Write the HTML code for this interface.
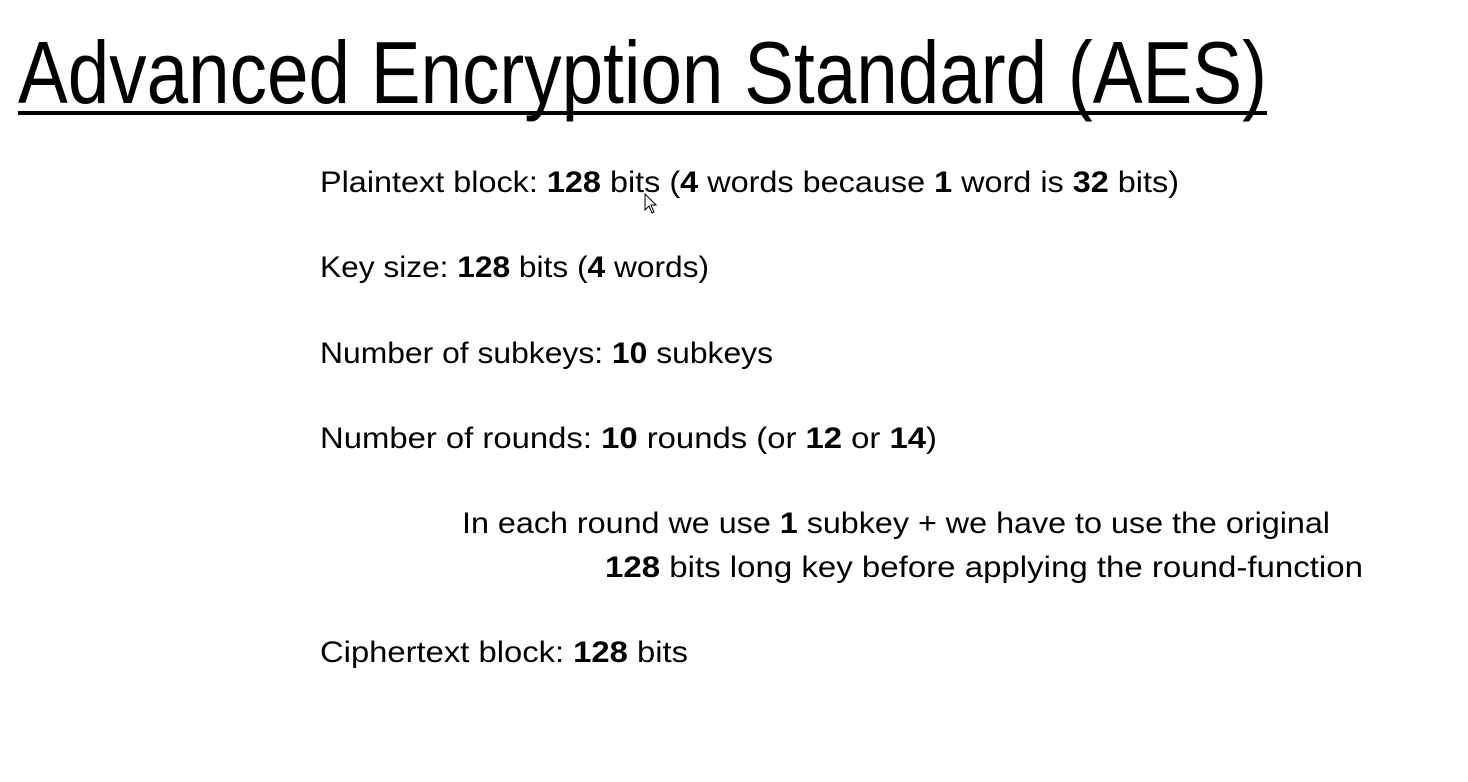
<!DOCTYPE html>
<html><head><meta charset="utf-8"><style>
html,body{margin:0;padding:0;background:#fff;width:1468px;height:782px;overflow:hidden}
svg{display:block}
text{font-family:"Liberation Sans",sans-serif;fill:#000}
</style></head><body>
<svg width="1468" height="782" viewBox="0 0 1468 782">
<text x="18" y="103" font-size="88" textLength="1249" lengthAdjust="spacingAndGlyphs">Advanced Encryption Standard (AES)</text>
<rect x="18" y="111" width="1249" height="4" fill="#000"/>
<g font-size="30">
<text x="320" y="192" textLength="859" lengthAdjust="spacingAndGlyphs">Plaintext block: <tspan font-weight="bold">128</tspan> bits (<tspan font-weight="bold">4</tspan> words because <tspan font-weight="bold">1</tspan> word is <tspan font-weight="bold">32</tspan> bits)</text>
<text x="320" y="277" textLength="389" lengthAdjust="spacingAndGlyphs">Key size: <tspan font-weight="bold">128</tspan> bits (<tspan font-weight="bold">4</tspan> words)</text>
<text x="320" y="363" textLength="453" lengthAdjust="spacingAndGlyphs">Number of subkeys: <tspan font-weight="bold">10</tspan> subkeys</text>
<text x="320" y="448" textLength="617" lengthAdjust="spacingAndGlyphs">Number of rounds: <tspan font-weight="bold">10</tspan> rounds (or <tspan font-weight="bold">12</tspan> or <tspan font-weight="bold">14</tspan>)</text>
<text x="462" y="533" textLength="868" lengthAdjust="spacingAndGlyphs">In each round we use <tspan font-weight="bold">1</tspan> subkey + we have to use the original</text>
<text x="605" y="577" textLength="758" lengthAdjust="spacingAndGlyphs"><tspan font-weight="bold">128</tspan> bits long key before applying the round-function</text>
<text x="320" y="662" textLength="368" lengthAdjust="spacingAndGlyphs">Ciphertext block: <tspan font-weight="bold">128</tspan> bits</text>
</g>
<path d="M645 194 L645 210 L649 206 L652 213 L654 212 L651 205 L656 205 Z" fill="#fff" stroke="#000" stroke-width="1"/>
</svg>
</body></html>
